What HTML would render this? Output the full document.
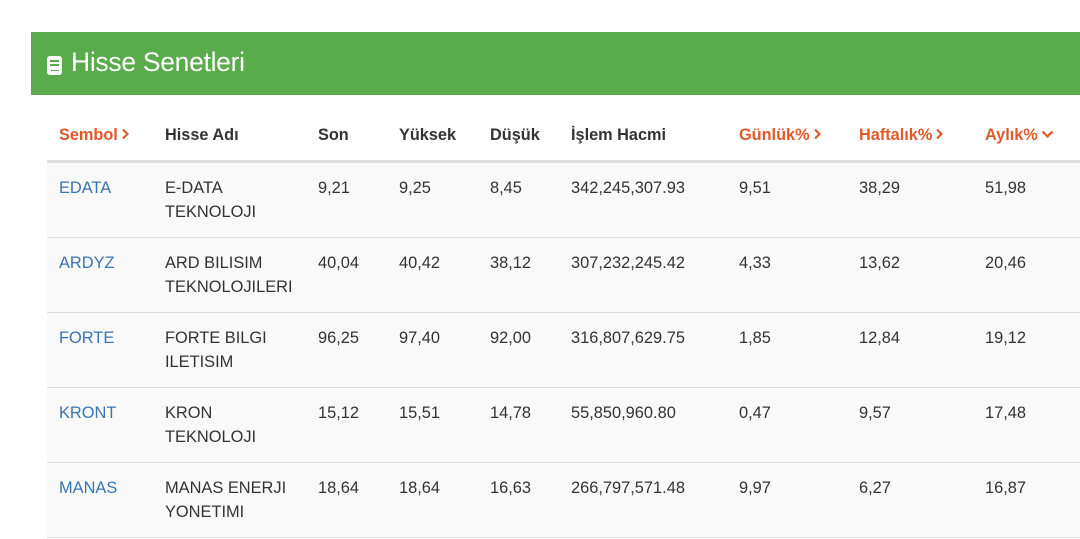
<!DOCTYPE html>
<html><head><meta charset="utf-8"><style>
body{margin:0;width:1080px;height:539px;overflow:hidden;background:#fff;font-family:"Liberation Sans",Arial,sans-serif;position:relative}
.hdr{position:absolute;left:31px;top:32px;width:1049px;height:63px;background:#5aab4c}
.hdr span{position:absolute;left:40px;top:15px;font-size:26.5px;color:#fff;letter-spacing:-0.3px}
.ico{position:absolute;left:16px;top:24px;width:15px;height:19px;background:#fff;border-radius:3px}
.ico i{position:absolute;left:3px;width:9px;height:2px;background:#5aab4c}
.th{position:absolute;top:126px;font-size:16.3px;font-weight:bold;color:#333;white-space:nowrap}
.o{color:#e0592a}
.th svg{vertical-align:middle;margin-left:3px;margin-top:-3px}
.hl{position:absolute;left:47px;top:160px;width:1033px;height:3px;background:#ddd}
.row{position:absolute;left:47px;width:1033px;height:74px;background:#f9f9f9;border-bottom:1px solid #ddd}
.c{position:absolute;top:13px;font-size:16.4px;color:#333;line-height:24px;white-space:nowrap}
.s{color:#3a74b5}
</style></head><body>
<div class="hdr"><div class="ico"><i style="top:4px"></i><i style="top:8px"></i><i style="top:14px;width:8px;left:4px;height:1px"></i></div><span>Hisse Senetleri</span></div>
<div class="th o" style="left:59px">Sembol<svg width="8" height="12" viewBox="0 0 8 12"><path d="M2 1.5L6.5 6L2 10.5" fill="none" stroke="#e0592a" stroke-width="2.2"/></svg></div>
<div class="th" style="left:165px">Hisse Adı</div>
<div class="th" style="left:318px">Son</div>
<div class="th" style="left:399px">Yüksek</div>
<div class="th" style="left:490px">Düşük</div>
<div class="th" style="left:571px">İşlem Hacmi</div>
<div class="th o" style="left:739px">Günlük%<svg width="8" height="12" viewBox="0 0 8 12"><path d="M2 1.5L6.5 6L2 10.5" fill="none" stroke="#e0592a" stroke-width="2.2"/></svg></div>
<div class="th o" style="left:859px">Haftalık%<svg width="8" height="12" viewBox="0 0 8 12"><path d="M2 1.5L6.5 6L2 10.5" fill="none" stroke="#e0592a" stroke-width="2.2"/></svg></div>
<div class="th o" style="left:985px">Aylık%<svg width="13" height="10" viewBox="0 0 13 10"><path d="M1.5 2.5L6.5 7.5L11.5 2.5" fill="none" stroke="#e0592a" stroke-width="2.2"/></svg></div>
<div class="hl"></div>
<div class="row" style="top:163px"><div class="c s" style="left:12px">EDATA</div><div class="c" style="left:118px">E-DATA<br>TEKNOLOJI</div><div class="c" style="left:271px">9,21</div><div class="c" style="left:352px">9,25</div><div class="c" style="left:443px">8,45</div><div class="c" style="left:524px">342,245,307.93</div><div class="c" style="left:692px">9,51</div><div class="c" style="left:812px">38,29</div><div class="c" style="left:938px">51,98</div></div>
<div class="row" style="top:238px"><div class="c s" style="left:12px">ARDYZ</div><div class="c" style="left:118px">ARD BILISIM<br>TEKNOLOJILERI</div><div class="c" style="left:271px">40,04</div><div class="c" style="left:352px">40,42</div><div class="c" style="left:443px">38,12</div><div class="c" style="left:524px">307,232,245.42</div><div class="c" style="left:692px">4,33</div><div class="c" style="left:812px">13,62</div><div class="c" style="left:938px">20,46</div></div>
<div class="row" style="top:313px"><div class="c s" style="left:12px">FORTE</div><div class="c" style="left:118px">FORTE BILGI<br>ILETISIM</div><div class="c" style="left:271px">96,25</div><div class="c" style="left:352px">97,40</div><div class="c" style="left:443px">92,00</div><div class="c" style="left:524px">316,807,629.75</div><div class="c" style="left:692px">1,85</div><div class="c" style="left:812px">12,84</div><div class="c" style="left:938px">19,12</div></div>
<div class="row" style="top:388px"><div class="c s" style="left:12px">KRONT</div><div class="c" style="left:118px">KRON<br>TEKNOLOJI</div><div class="c" style="left:271px">15,12</div><div class="c" style="left:352px">15,51</div><div class="c" style="left:443px">14,78</div><div class="c" style="left:524px">55,850,960.80</div><div class="c" style="left:692px">0,47</div><div class="c" style="left:812px">9,57</div><div class="c" style="left:938px">17,48</div></div>
<div class="row" style="top:463px"><div class="c s" style="left:12px">MANAS</div><div class="c" style="left:118px">MANAS ENERJI<br>YONETIMI</div><div class="c" style="left:271px">18,64</div><div class="c" style="left:352px">18,64</div><div class="c" style="left:443px">16,63</div><div class="c" style="left:524px">266,797,571.48</div><div class="c" style="left:692px">9,97</div><div class="c" style="left:812px">6,27</div><div class="c" style="left:938px">16,87</div></div>
</body></html>
